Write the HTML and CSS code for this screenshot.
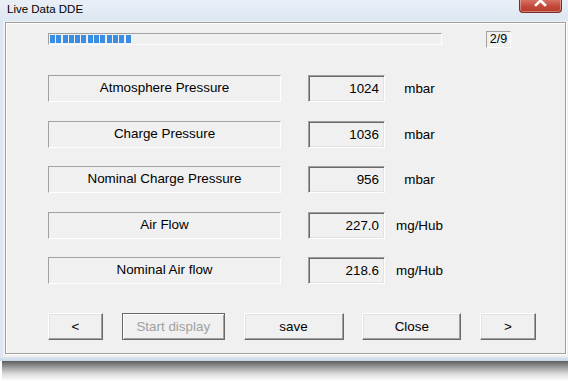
FILE: index.html
```html
<!DOCTYPE html>
<html lang="en">
<head>
  <meta charset="UTF-8">
  <title>Live Data DDE</title>
  <link rel="stylesheet" href="styles.css">
</head>
<body>
  <div class="window">
    <div class="titlebar">
      <span class="title">Live Data DDE</span>
      <div class="close-btn">
        <svg width="14" height="10" viewBox="0 0 14 10">
          <path d="M2 -4 L11 5 M11 -4 L2 5" stroke="#fff" stroke-width="2.6" stroke-linecap="square"/>
        </svg>
      </div>
    </div>
    <div class="client">
      <div class="group">
        <div class="progress-row">
          <div class="progress">
            <span class="seg"></span><span class="seg"></span><span class="seg"></span><span class="seg"></span>
            <span class="seg"></span><span class="seg"></span><span class="seg"></span><span class="seg"></span>
            <span class="seg"></span><span class="seg"></span><span class="seg"></span><span class="seg"></span>
            <span class="seg"></span>
          </div>
          <div class="page-no">2/9</div>
        </div>

        <div class="rows">
          <div class="row">
            <div class="label">Atmosphere Pressure</div>
            <div class="value">1024</div>
            <div class="unit">mbar</div>
          </div>
          <div class="row">
            <div class="label">Charge Pressure</div>
            <div class="value">1036</div>
            <div class="unit">mbar</div>
          </div>
          <div class="row">
            <div class="label">Nominal Charge Pressure</div>
            <div class="value">956</div>
            <div class="unit">mbar</div>
          </div>
          <div class="row">
            <div class="label">Air Flow</div>
            <div class="value">227.0</div>
            <div class="unit">mg/Hub</div>
          </div>
          <div class="row">
            <div class="label">Nominal Air flow</div>
            <div class="value">218.6</div>
            <div class="unit">mg/Hub</div>
          </div>
        </div>

        <div class="buttons">
          <button class="btn btn-prev">&lt;</button>
          <button class="btn btn-start" disabled>Start display</button>
          <button class="btn btn-save">save</button>
          <button class="btn btn-close">Close</button>
          <button class="btn btn-next">&gt;</button>
        </div>
      </div>
    </div>
    <div class="frame-bottom"></div>
  </div>
  <div class="shadow"></div>
</body>
</html>
```

FILE: styles.css
```css
* {
  box-sizing: border-box;
}

body {
  margin: 0;
  width: 568px;
  height: 381px;
  overflow: hidden;
  background: #fff;
  font-family: "Liberation Sans", Arial, sans-serif;
  font-size: 13.4px;
  color: #000;
}

.window {
  width: 580px;
  background: #dce6f1;
  padding-left: 3px;
}

.titlebar {
  height: 21px;
  margin-left: -3px;
  background: linear-gradient(#e9eff6, #dde7f2);
  display: flex;
  align-items: flex-start;
  position: relative;
}

.title {
  font-size: 11.5px;
  padding: 3px 0 0 7px;
}

.close-btn {
  position: absolute;
  left: 519px;
  top: -1px;
  width: 43px;
  height: 14px;
  border: 1px solid #7c2b22;
  border-top: none;
  border-radius: 0 0 4px 4px;
  background: linear-gradient(#d9786a, #c24a3b 55%, #b63a2a);
  box-shadow: inset 0 0 0 1px rgba(255, 255, 255, 0.35);
  display: flex;
  justify-content: center;
}

.close-btn svg {
  display: block;
  margin-top: 1px;
}

.client {
  background: #f0f0f0;
  height: 336px;
  padding: 1px 0 0 2px;
}

.group {
  width: 561px;
  height: 332px;
  border: 1px solid #a0a0a0;
  box-shadow: 1px 1px 0 #fff, inset 1px 1px 0 #fff;
  padding: 8px 0 0 42px;
}

.progress-row {
  display: flex;
  align-items: flex-start;
  height: 17px;
}

.progress {
  margin-top: 2px;
  width: 394px;
  height: 12px;
  border: 1px solid;
  border-color: #a0a0a0 #fff #fff #a0a0a0;
  padding: 1px;
  display: flex;
  gap: 1.3px;
}

.seg {
  width: 5px;
  height: 8px;
  background: #3a8ee3;
}

.page-no {
  margin-left: 44px;
  width: 25px;
  height: 17px;
  border: 1px solid;
  border-color: #a0a0a0 #fff #fff #a0a0a0;
  font-size: 12.5px;
  line-height: 15px;
  text-align: center;
}

.rows {
  margin-top: 27px;
  display: grid;
  grid-template-rows: repeat(5, 27px);
  row-gap: 18.5px;
}

.row {
  display: flex;
  align-items: center;
}

.label {
  width: 233px;
  height: 27px;
  border: 1px solid;
  border-color: #a0a0a0 #fff #fff #a0a0a0;
  text-align: center;
  line-height: 24px;
}

.value {
  margin-left: 27px;
  width: 77px;
  height: 27px;
  border: 1px solid;
  border-color: #a0a0a0 #fff #fff #a0a0a0;
  box-shadow: inset 1px 1px 0 #696969, inset -1px -1px 0 #e3e3e3;
  text-align: right;
  padding-right: 5px;
  line-height: 25px;
}

.unit {
  margin-left: 10px;
  width: 49px;
  text-align: center;
}

.buttons {
  margin-top: 29px;
  width: 488px;
  display: flex;
  justify-content: space-between;
}

.btn {
  height: 27px;
  font-family: "Liberation Sans", Arial, sans-serif;
  font-size: 13.4px;
  color: #000;
  background: #f0f0f0;
  border: 1px solid;
  border-color: #fff #696969 #696969 #fff;
  box-shadow: inset -1px -1px 0 #a0a0a0, inset 1px 1px 0 #e3e3e3;
  padding: 0;
}

.btn-prev { width: 55px; }
.btn-start { width: 103px; }
.btn-save { width: 100px; }
.btn-close { width: 99px; }
.btn-next { width: 56px; }

.btn-start {
  color: #a0a0a0;
  border-color: #696969;
  box-shadow: inset 1px 1px 0 #fff, inset -1px -1px 0 #a0a0a0;
}

.frame-bottom {
  height: 4px;
  margin-left: -3px;
  background: linear-gradient(#dce6f1, #c9d6e4);
}

.shadow {
  height: 20px;
  margin-left: 2px;
  background: linear-gradient(#5e5e5e, #9a9a9a 30%, #dcdcdc 65%, #fff);
}
```
